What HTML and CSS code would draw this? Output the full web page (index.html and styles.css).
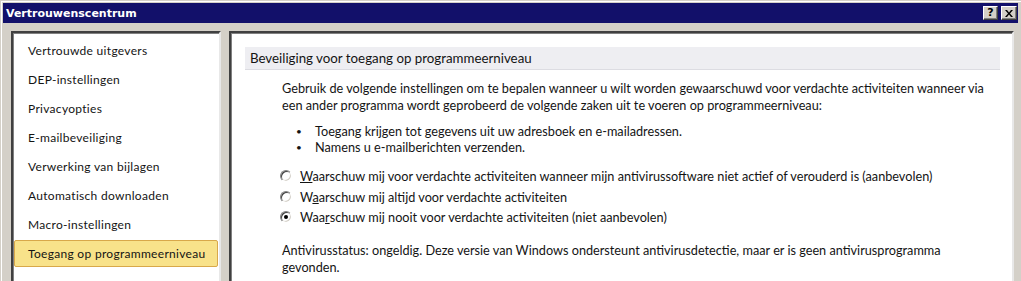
FILE: index.html
```html
<!DOCTYPE html>
<html lang="nl">
<head>
<meta charset="utf-8">
<title>Vertrouwenscentrum</title>
<link rel="stylesheet" href="styles.css">
</head>
<body>
<div class="window">
  <div class="titlebar">
    <span class="title">Vertrouwenscentrum</span>
    <div class="tbtns">
      <span class="tbtn">?</span>
      <span class="tbtn x">
        <svg width="8" height="7" viewBox="0 0 8 7"><path d="M0 0h2l2 2.5 2-2.5h2L5 3.5 8 7H6L4 4.5 2 7H0l3-3.5z" fill="#000"/></svg>
      </span>
    </div>
  </div>
  <div class="content">
    <div class="pane nav">
      <div class="item">Vertrouwde uitgevers</div>
      <div class="item">DEP-instellingen</div>
      <div class="item">Privacyopties</div>
      <div class="item">E-mailbeveiliging</div>
      <div class="item">Verwerking van bijlagen</div>
      <div class="item">Automatisch downloaden</div>
      <div class="item">Macro-instellingen</div>
      <div class="item selected">Toegang op programmeerniveau</div>
    </div>
    <div class="pane main">
      <div class="section-head">Beveiliging voor toegang op programmeerniveau</div>
      <div class="body">
        <p class="intro">Gebruik de volgende instellingen om te bepalen wanneer u wilt worden gewaarschuwd voor verdachte activiteiten wanneer via een ander programma wordt geprobeerd de volgende zaken uit te voeren op programmeerniveau:</p>
        <ul class="bullets">
          <li>Toegang krijgen tot gegevens uit uw adresboek en e-mailadressen.</li>
          <li>Namens u e-mailberichten verzenden.</li>
        </ul>
        <div class="radios">
          <div class="radio"><span class="rb"></span><span><u>W</u>aarschuw mij voor verdachte activiteiten wanneer mijn antivirussoftware niet actief of verouderd is (aanbevolen)</span></div>
          <div class="radio"><span class="rb"></span><span>W<u>a</u>arschuw mij altijd voor verdachte activiteiten</span></div>
          <div class="radio"><span class="rb on"></span><span>Waa<u>r</u>schuw mij nooit voor verdachte activiteiten (niet aanbevolen)</span></div>
        </div>
        <p class="status">Antivirusstatus: ongeldig. Deze versie van Windows ondersteunt antivirusdetectie, maar er is geen antivirusprogramma gevonden.</p>
      </div>
    </div>
  </div>
</div>
</body>
</html>
```

FILE: styles.css
```css
html, body {
  margin: 0;
  padding: 0;
  background: #d4d0c8;
  overflow: hidden;
  height: 281px;
}
body {
  font-family: Lato, "Liberation Sans", sans-serif;
  font-size: 12.7px;
  color: #141414;
}
.window {
  border-top: 1px solid #d4d0c8;
  border-left: 1px solid #d4d0c8;
  box-shadow: inset 1px 1px 0 #ffffff;
  padding: 2px 3px 0 2px;
  height: 300px;
}
.titlebar {
  height: 20px;
  background: #12106a;
  display: flex;
  align-items: center;
  justify-content: space-between;
  padding: 0 1px 0 3px;
}
.title {
  font-family: "DejaVu Sans", Verdana, sans-serif;
  font-weight: bold;
  font-size: 11px;
  color: #ffffff;
}
.tbtns {
  display: flex;
  gap: 3px;
}
.tbtn {
  width: 13px;
  height: 12px;
  background: #d4d0c8;
  border: 1px solid;
  border-color: #ffffff #404040 #404040 #ffffff;
  box-shadow: inset -1px -1px 0 #808080;
  display: flex;
  align-items: center;
  justify-content: center;
  font-family: "DejaVu Sans", sans-serif;
  font-weight: bold;
  font-size: 11px;
  line-height: 12px;
  color: #000;
}
.tbtn.x { width: 14px; }
.content {
  display: flex;
  gap: 8px;
  padding: 8px 4px 0 8px;
}
.pane {
  background: #ffffff;
  border: 2px solid;
  border-color: #404040 #e8e8e8 #e8e8e8 #404040;
  box-shadow: inset 1px 1px 0 #808080;
  height: 280px;
  box-sizing: border-box;
}
.nav {
  width: 210px;
  flex: none;
  padding: 2px 1px 0 1px;
  font-size: 12px;
}
.item {
  height: 29px;
  line-height: 29px;
  padding-left: 13px;
  letter-spacing: 0.3px;
  border: 1px solid transparent;
  box-sizing: border-box;
}
.item.selected {
  background: #f8e28a;
  border-color: #d8a84a;
  border-radius: 2px;
  height: 27px;
  line-height: 25px;
  margin-top: 2px;
}
.main {
  flex: 1;
  padding: 14px 12px 0 14px;
}
.section-head {
  background: #eeeef2;
  border-bottom: 1px solid #dcdce2;
  height: 22px;
  line-height: 22px;
  padding-left: 5px;
  font-size: 13.3px;
}
.body {
  padding-left: 37px;
}
.intro {
  margin: 10px 0 0;
  line-height: 17px;
  max-width: 715px;
}
.bullets {
  margin: 9px 0 0;
  padding-left: 0;
  list-style: none;
  line-height: 16px;
}
.bullets li {
  display: flex;
}
.bullets li::before {
  content: "\2022";
  width: 19px;
  padding-left: 14px;
  font-size: 10px;
  flex: none;
}
.radios {
  margin-top: 11px;
  margin-left: -2px;
}
.radio {
  display: flex;
  align-items: center;
  gap: 8px;
  height: 20.5px;
}
.rb {
  width: 12px;
  height: 12px;
  box-sizing: border-box;
  border-radius: 50%;
  border: 1px solid;
  border-color: #808080 #ffffff #ffffff #808080;
  box-shadow: inset 1px 1px 0 #404040, inset -1px -1px 0 #d4d0c8;
  background: #fff;
  position: relative;
  flex: none;
}
.rb.on::after {
  content: "";
  position: absolute;
  left: 3px;
  top: 3px;
  width: 4px;
  height: 4px;
  border-radius: 50%;
  background: #000;
}
.status {
  margin: 14px 0 0;
  line-height: 17px;
  max-width: 670px;
}
```
